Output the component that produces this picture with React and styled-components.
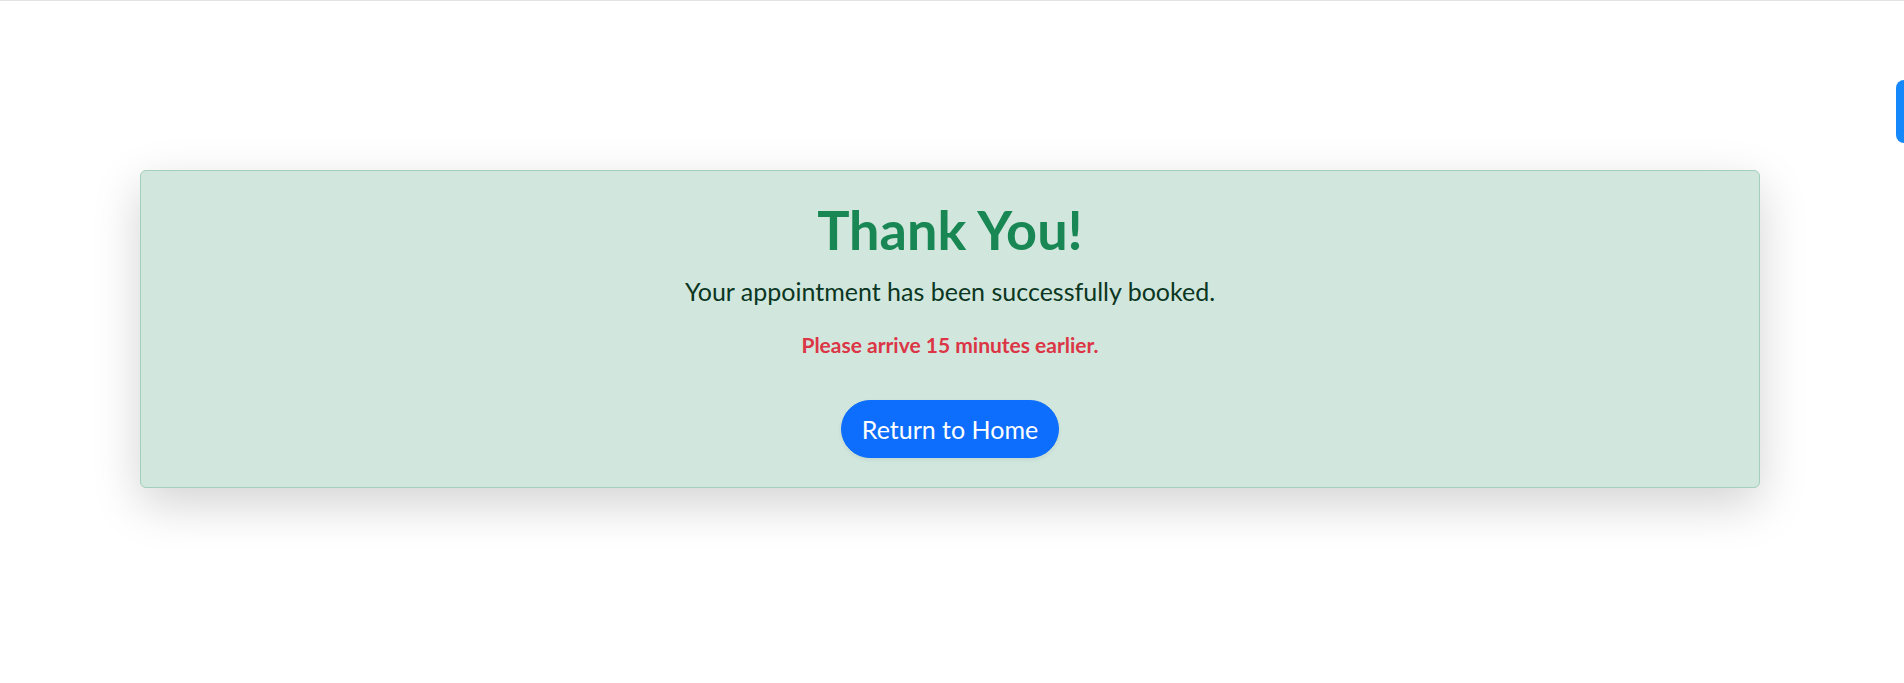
import React from 'react';
import styled, { createGlobalStyle } from 'styled-components';

const GlobalStyle = createGlobalStyle`
  html, body {
    margin: 0;
    padding: 0;
    background: #fff;
  }

  body {
    font-family: Lato, "Noto Sans", sans-serif;
    -webkit-font-smoothing: antialiased;
  }
`;

const Page = styled.div`
  min-height: 683px;
  box-sizing: border-box;
  border-top: 1px solid #e3e3e3;
  padding: 169px 144px 0 140px;
`;

const Alert = styled.section`
  box-sizing: border-box;
  height: 318px;
  padding: 27px 24px 29px;
  display: flex;
  flex-direction: column;
  align-items: center;
  background-color: #d1e7dd;
  border: 1px solid #a3cfbb;
  border-radius: 6px;
  color: #0a3622;
  box-shadow: 0 1rem 3rem rgba(0, 0, 0, 0.175);
  text-align: center;
`;

const Title = styled.h1`
  margin: 0;
  font-size: 54px;
  line-height: 1.2;
  font-weight: 700;
  color: #198754;
`;

const Lead = styled.p`
  margin: 10px 0 0;
  font-size: 25px;
  line-height: 1.5;
`;

const Note = styled.p`
  margin: 19px 0 0;
  font-size: 21px;
  line-height: 1.5;
  font-weight: 700;
  color: #dc3545;
`;

const HomeButton = styled.button`
  margin-top: 39px;
  box-sizing: border-box;
  width: 218px;
  height: 59px;
  padding: 0;
  border: 1px solid #0d6efd;
  border-radius: 50rem;
  background-color: #0d6efd;
  color: #fff;
  font-family: inherit;
  font-size: 25px;
  cursor: pointer;
  box-shadow: 0 0.125rem 0.25rem rgba(0, 0, 0, 0.075);
`;

const SideTab = styled.div`
  position: fixed;
  top: 80px;
  right: 0;
  width: 8px;
  height: 63px;
  background-color: #1589fb;
  border-radius: 8px 0 0 8px;
`;

export default function App() {
  return (
    <>
      <GlobalStyle />
      <Page>
        <Alert>
          <Title>Thank You!</Title>
          <Lead>Your appointment has been successfully booked.</Lead>
          <Note>Please arrive 15 minutes earlier.</Note>
          <HomeButton type="button">Return to Home</HomeButton>
        </Alert>
      </Page>
      <SideTab />
    </>
  );
}
